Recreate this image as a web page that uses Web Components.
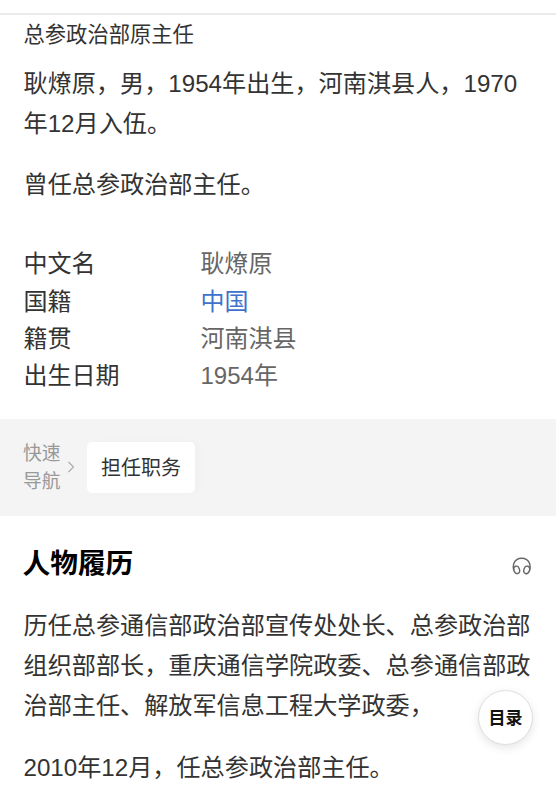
<!DOCTYPE html>
<html lang="zh-CN">
<head>
<meta charset="utf-8">
<title>耿燎原</title>
<style>
  body {
    margin: 0;
    background: #fff;
    color: #333;
    font-family: "Liberation Sans", "Noto Sans CJK SC", sans-serif;
  }
</style>
</head>
<body>

<wiki-page>
  <wiki-summary slot="summary">
    <span slot="desc">总参政治部原主任</span>
    <wiki-para>耿燎原，男，1954年出生，河南淇县人，1970<br>年12月入伍。</wiki-para>
    <wiki-para>曾任总参政治部主任。</wiki-para>
  </wiki-summary>
  <info-list slot="info">
    <info-row label="中文名">耿燎原</info-row>
    <info-row label="国籍" link>中国</info-row>
    <info-row label="籍贯">河南淇县</info-row>
    <info-row label="出生日期">1954年</info-row>
  </info-list>
  <quick-nav slot="nav">担任职务</quick-nav>
  <wiki-section>
    <span slot="title">人物履历</span>
    <wiki-para>历任总参通信部政治部宣传处处长、总参政治部<br>组织部部长，重庆通信学院政委、总参通信部政<br>治部主任、解放军信息工程大学政委，</wiki-para>
    <wiki-para>2010年12月，任总参政治部主任。</wiki-para>
  </wiki-section>
  <catalog-button slot="float">目录</catalog-button>
</wiki-page>

<script>
class BaseElement extends HTMLElement {
  constructor() {
    super();
    this.attachShadow({ mode: 'open' });
  }

  connectedCallback() {
    this.shadowRoot.innerHTML = this.render();
  }
}

class WikiPage extends BaseElement {
  render() {
    return `
      <style>
        :host {
          display: flex;
          flex-direction: column;
          box-sizing: border-box;
          height: 810px;
          padding-top: 13px;
          overflow: hidden;
          position: relative;
        }
        .line {
          flex: none;
          height: 2px;
          background: #ebebeb;
        }
      </style>
      <div class="line"></div>
      <slot name="summary"></slot>
      <slot name="info"></slot>
      <slot name="nav"></slot>
      <slot></slot>
      <slot name="float"></slot>
    `;
  }
}

class WikiPara extends BaseElement {
  render() {
    return `
      <style>
        :host {
          display: block;
          font-size: 24.15px;
          line-height: 40.4px;
          white-space: nowrap;
        }
      </style>
      <slot></slot>
    `;
  }
}

class WikiSummary extends BaseElement {
  render() {
    return `
      <style>
        :host {
          display: flex;
          flex-direction: column;
          gap: 20px;
          padding: 4px 23px 0 23.5px;
        }
        .desc {
          font-size: 21.3px;
          line-height: 32px;
          margin-bottom: -7px;
        }
      </style>
      <div class="desc"><slot name="desc"></slot></div>
      <slot></slot>
    `;
  }
}

class InfoList extends BaseElement {
  render() {
    return `
      <style>
        :host {
          display: grid;
          grid-auto-rows: 37.4px;
          padding: 40px 23.5px 23.8px;
        }
      </style>
      <slot></slot>
    `;
  }
}

class InfoRow extends BaseElement {
  render() {
    const color = this.hasAttribute('link') ? '#3f72cc' : '#666';
    return `
      <style>
        :host {
          display: grid;
          grid-template-columns: 177px 1fr;
          font-size: 24px;
          line-height: 37.4px;
        }
        .value { color: ${color}; }
      </style>
      <span>${this.getAttribute('label')}</span>
      <span class="value"><slot></slot></span>
    `;
  }
}

class QuickNav extends BaseElement {
  render() {
    return `
      <style>
        :host {
          display: flex;
          align-items: center;
          box-sizing: border-box;
          flex: none;
          height: 97px;
          padding-left: 23px;
          background: #f4f4f4;
        }
        .name {
          width: 38px;
          padding-top: 2px;
          font-size: 18.8px;
          line-height: 28px;
          color: #999;
        }
        svg { margin: 0 12px 0 6px; }
        .item {
          display: flex;
          align-items: center;
          justify-content: center;
          box-sizing: border-box;
          width: 108px;
          height: 51px;
          padding-bottom: 2px;
          border-radius: 5px;
          background: #fff;
          font-size: 20px;
          box-shadow: 4px 0 8px rgba(0, 0, 0, .02);
        }
      </style>
      <div class="name">快速<br>导航</div>
      <svg width="8" height="12" viewBox="0 0 8 12" fill="none" stroke="#aaa" stroke-width="1.1">
        <path d="M1.5 1 6.5 6 1.5 11"/>
      </svg>
      <div class="item"><slot></slot></div>
    `;
  }
}

class WikiSection extends BaseElement {
  render() {
    return `
      <style>
        :host {
          display: flex;
          flex-direction: column;
          gap: 21px;
          padding: 27px 24px 0 23.5px;
        }
        header {
          display: flex;
          justify-content: space-between;
          align-items: center;
          height: 42px;
        }
        h2 {
          margin: 0 0 0 -1px;
          font-size: 27.7px;
          line-height: 42px;
          font-weight: bold;
          color: #000;
        }
        svg { margin-top: 4px; }
      </style>
      <header>
        <h2><slot name="title"></slot></h2>
        <svg width="20" height="20" viewBox="0 0 20 20" fill="none" stroke="#666" stroke-width="1.4" stroke-linecap="round">
          <path d="M1.7 14C1.100 11.500 1.200 9.300 1.700 7.700a8.600 8.600 0 0 1 16 0c.5 1.600.6 3.800 0 6.300"/>
          <ellipse cx="4.700" cy="13.900" rx="2.800" ry="3.800" transform="rotate(-18 4.700 13.900)"/>
          <ellipse cx="14.700" cy="13.900" rx="2.800" ry="3.800" transform="rotate(18 14.700 13.900)"/>
        </svg>
      </header>
      <slot></slot>
    `;
  }
}

// round button floating over the article
class CatalogButton extends BaseElement {
  render() {
    return `
      <style>
        :host {
          position: absolute;
          right: 23px;
          bottom: 65px;
          display: flex;
          align-items: center;
          justify-content: center;
          box-sizing: border-box;
          width: 55px;
          height: 55px;
          padding-bottom: 2px;
          border: 1px solid #dedede;
          border-radius: 50%;
          background: #fff;
          box-shadow: 0 3px 10px rgba(0, 0, 0, .1);
          color: #111;
          font-size: 17px;
          font-weight: bold;
        }
      </style>
      <slot></slot>
    `;
  }
}

customElements.define('wiki-page', WikiPage);
customElements.define('wiki-para', WikiPara);
customElements.define('wiki-summary', WikiSummary);
customElements.define('info-list', InfoList);
customElements.define('info-row', InfoRow);
customElements.define('quick-nav', QuickNav);
customElements.define('wiki-section', WikiSection);
customElements.define('catalog-button', CatalogButton);
</script>
</body>
</html>
